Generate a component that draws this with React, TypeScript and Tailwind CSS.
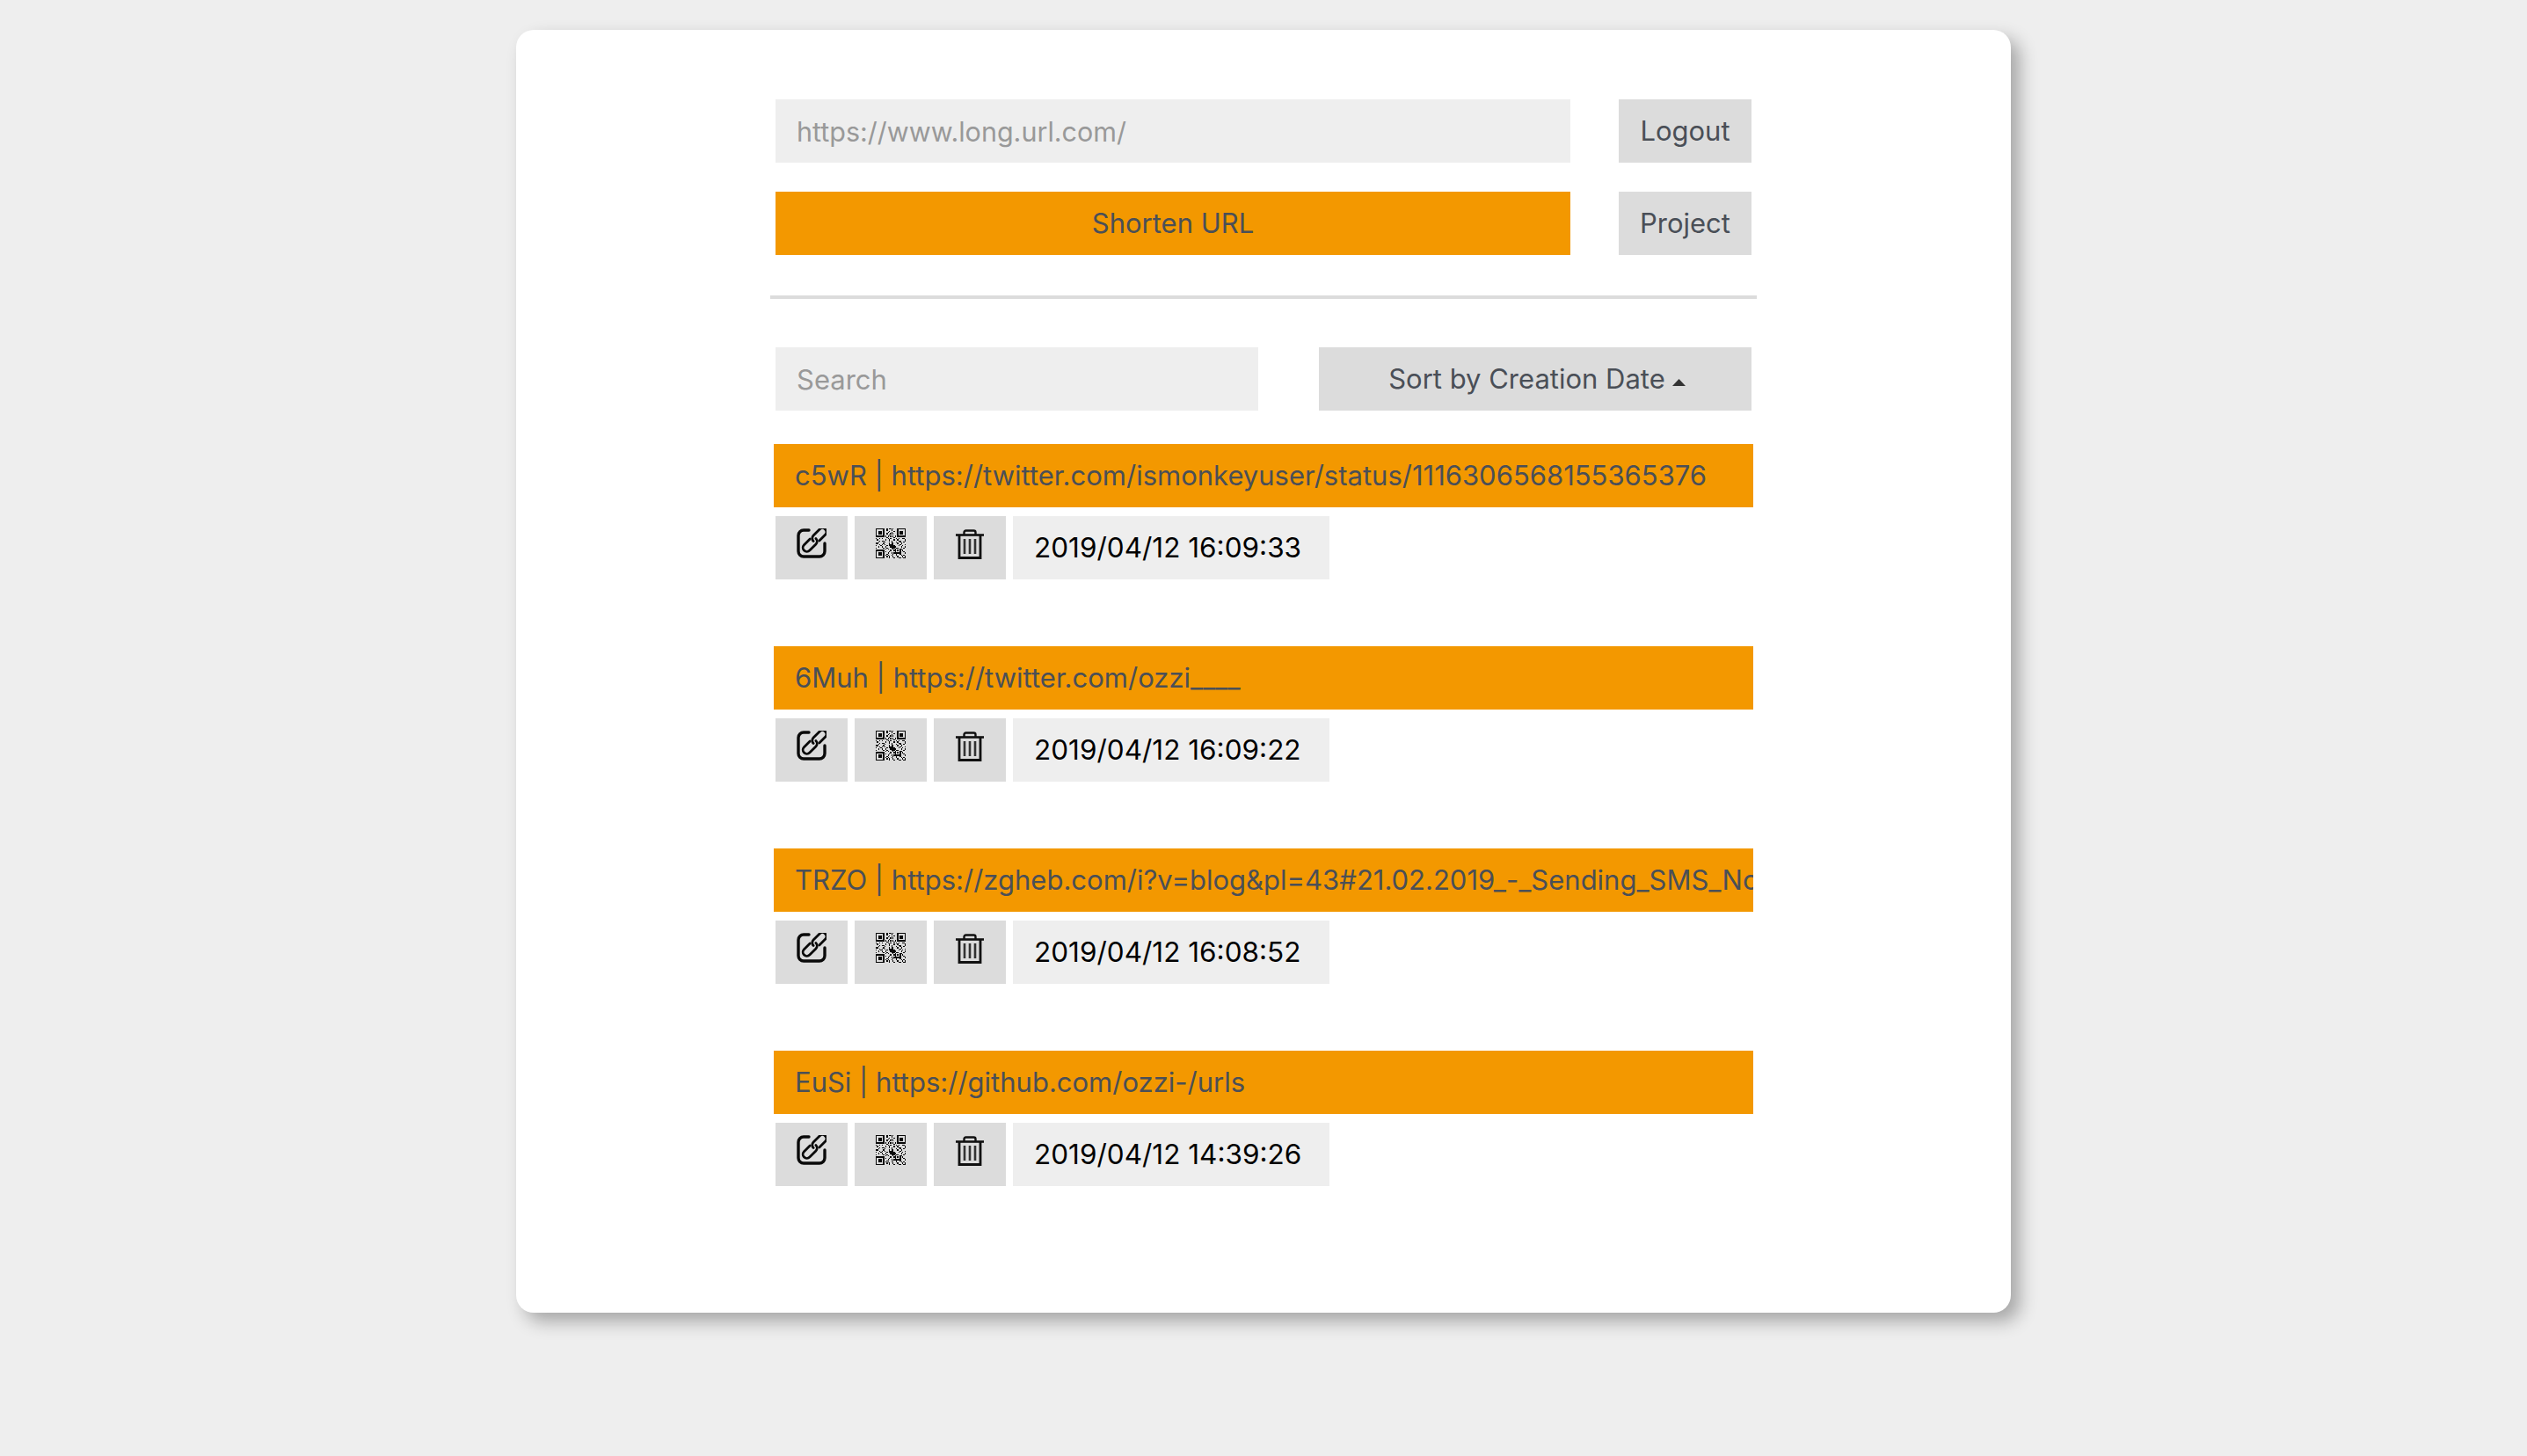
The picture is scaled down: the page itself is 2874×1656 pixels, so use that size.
const QR = [
  "1111111001011010001111111",
  "1000001001000100001000001",
  "1011101000010001001011101",
  "1011101000100100001011101",
  "1011101001001010001011101",
  "1000001000010000001000001",
  "1111111010101010101111111",
  "0000000001000001000000000",
  "1001010000101000010100110",
  "0100000010010001001000001",
  "0001011000010100000110001",
  "0010000100000100010010010",
  "1100001000010110001001000",
  "0001010100011110000010001",
  "1000100001011111000100100",
  "0010010010001111100001001",
  "1000001001000111011000010",
  "0000000010100010100011000",
  "1111111000001001101010100",
  "1000001010010000100010010",
  "1011101000100101111110001",
  "1011101001000010010010000",
  "1011101010100100010001010",
  "1000001001010010001000101",
  "1111111000010001000110011",
];

function LinkIcon() {
  return (
    <svg width="34" height="34" viewBox="0 0 34 34" fill="none" stroke="#0a0a0a" strokeWidth="3.4">
      <path d="M14 2H8a6 6 0 0 0-6 6v18a6 6 0 0 0 6 6h18a6 6 0 0 0 6-6V17" strokeLinecap="round" />
      <g transform="translate(20.5 13) rotate(-45)" strokeWidth="2.8" strokeLinecap="round">
        <path d="M3 4.5H12.5a4.5 4.5 0 0 0 0-9H2.5a4.5 4.5 0 0 0-4.5 4.5" />
        <path d="M-3-4.5H-12.5a4.5 4.5 0 0 0 0 9H-2.5a4.5 4.5 0 0 0 4.5-4.5" />
      </g>
    </svg>
  );
}

function QrIcon() {
  return (
    <svg width="34" height="34" viewBox="0 0 25 25" shapeRendering="crispEdges">
      {QR.flatMap((row, y) =>
        row.split("").map((c, x) => (c === "1" ? <rect key={`${x}-${y}`} x={x} y={y} width="1" height="1" fill="#0a0a0a" /> : null)),
      )}
    </svg>
  );
}

function TrashIcon() {
  return (
    <svg width="32" height="34" viewBox="0 0 32 34" fill="none" stroke="#111111">
      <path d="M0 6.5H32" strokeWidth="2.6" />
      <path d="M9.5 6V3.5a2 2 0 0 1 2-2h9a2 2 0 0 1 2 2V6" strokeWidth="2.4" />
      <path d="M4 6.5V32.5H28V6.5" strokeWidth="2.8" />
      <path d="M10 11V28M16 11V28M22 11V28" strokeWidth="2.6" stroke="#333333" />
    </svg>
  );
}

function Entry({ text, date }: { text: string; date: string }) {
  return (
    <div className="flex flex-col gap-[10px]">
      <div className="h-[72px] bg-[#f39800] px-[24px] overflow-hidden whitespace-nowrap flex items-center text-[#4a4f57]">
        <span>{text}</span>
      </div>
      <div className="flex gap-[8px] px-[2px] h-[72px]">
        <div className="w-[82px] bg-[#dcdcdc] flex justify-center pt-[14px]"><LinkIcon /></div>
        <div className="w-[82px] bg-[#dcdcdc] flex justify-center pt-[14px]"><QrIcon /></div>
        <div className="w-[82px] bg-[#dcdcdc] flex justify-center pt-[15px]"><TrashIcon /></div>
        <div className="w-[360px] bg-[#eeeeee] flex items-center px-[24px] text-black text-[31.5px]">{date}</div>
      </div>
    </div>
  );
}

const entries = [
  { text: "c5wR | https://twitter.com/ismonkeyuser/status/1116306568155365376", date: "2019/04/12 16:09:33" },
  { text: "6Muh | https://twitter.com/ozzi____", date: "2019/04/12 16:09:22" },
  { text: "TRZO | https://zgheb.com/i?v=blog&pl=43#21.02.2019_-_Sending_SMS_Notifications", date: "2019/04/12 16:08:52" },
  { text: "EuSi | https://github.com/ozzi-/urls", date: "2019/04/12 14:39:26" },
];

export default function App() {
  return (
    <div className="min-h-screen bg-[#eeeeee] pt-[34px] font-['Inter',sans-serif] text-[31px] text-[#4a4f57]">
      <div className="w-[1700px] mx-auto bg-white rounded-[20px] shadow-[10px_10px_20px_rgba(0,0,0,0.3)] pt-[79px] pb-[144px] px-[293px]">
        <div className="flex flex-col gap-[33px] px-[2px]">
          <div className="flex gap-[55px]">
            <input
              readOnly
              placeholder="https://www.long.url.com/"
              className="w-[904px] h-[72px] bg-[#eeeeee] px-[24px] outline-none text-[30.5px] placeholder:text-[#999999]"
            />
            <div className="w-[151px] h-[72px] bg-[#dcdcdc] flex items-center justify-center">Logout</div>
          </div>
          <div className="flex gap-[55px]">
            <div className="w-[904px] h-[72px] bg-[#f39800] flex items-center justify-center">Shorten URL</div>
            <div className="w-[151px] h-[72px] bg-[#dcdcdc] flex items-center justify-center">Project</div>
          </div>
        </div>
        <div className="h-[4px] bg-[#dcdcdc] mt-[46px] -mx-[4px]" />
        <div className="flex justify-between px-[2px] mt-[55px]">
          <input
            readOnly
            placeholder="Search"
            className="w-[549px] h-[72px] bg-[#eeeeee] px-[24px] outline-none placeholder:text-[#999999]"
          />
          <div className="w-[492px] h-[72px] bg-[#dcdcdc] flex items-center justify-center gap-[8px] pl-[4px]">
            <span>Sort by Creation Date</span>
            <svg width="15" height="8" viewBox="0 0 15 8" className="mt-[8px]">
              <path d="M7.5 0L15 8H0Z" fill="#333333" />
            </svg>
          </div>
        </div>
        <div className="flex flex-col gap-[76px] mt-[38px]">
          {entries.map((e) => (
            <Entry key={e.date} text={e.text} date={e.date} />
          ))}
        </div>
      </div>
    </div>
  );
}
